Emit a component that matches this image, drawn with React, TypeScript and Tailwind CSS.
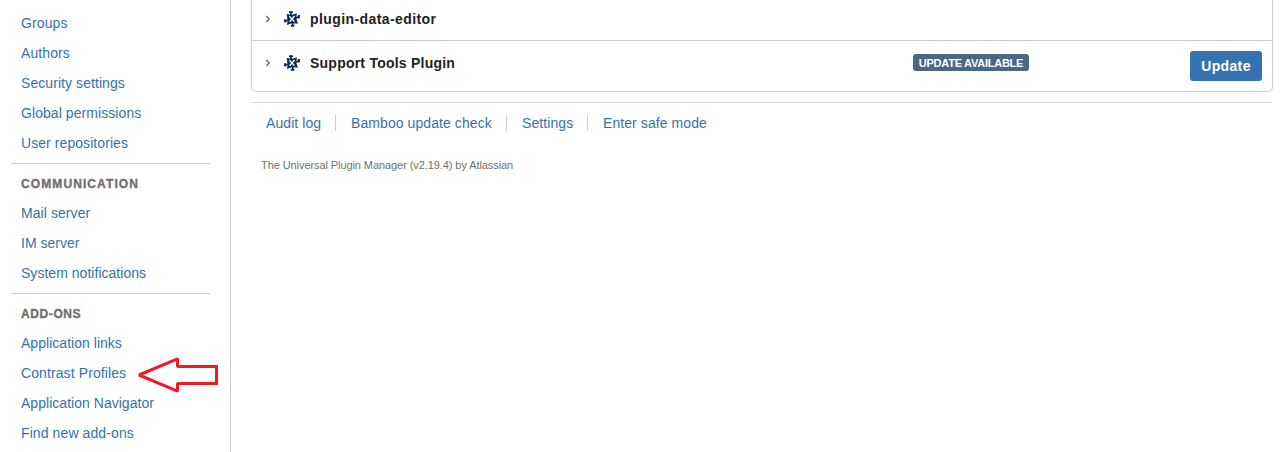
import React from "react";

type NavLink = { label: string; spacing?: string };

const general: NavLink[] = [
  { label: "Groups", spacing: "tracking-[0.12px]" },
  { label: "Authors", spacing: "tracking-[0.1px]" },
  { label: "Security settings" },
  { label: "Global permissions" },
  { label: "User repositories" },
];
const communication: NavLink[] = [
  { label: "Mail server" },
  { label: "IM server", spacing: "tracking-normal" },
  { label: "System notifications", spacing: "tracking-[0.03px]" },
];
const addons: NavLink[] = [
  { label: "Application links", spacing: "tracking-[0.03px]" },
  { label: "Contrast Profiles", spacing: "tracking-[0.1px]" },
  { label: "Application Navigator", spacing: "tracking-[0.03px]" },
  { label: "Find new add-ons", spacing: "tracking-[0.1px]" },
];

function NavSection({ title, titleSpacing, links }: { title?: string; titleSpacing?: string; links: NavLink[] }) {
  return (
    <section>
      {title && (
        <h2 className="mt-[5px] h-[29px] pl-2.5 text-[12px] leading-[30px] font-bold text-[#707070] [-webkit-text-stroke:0.35px_#707070]">
          <span className={titleSpacing}>{title}</span>
        </h2>
      )}
      <ul>
        {links.map((link) => (
          <li key={link.label} className="h-[30px] pl-2.5 leading-[30px]">
            <a href="#" className={link.spacing ?? "tracking-[0.07px]"}>{link.label}</a>
          </li>
        ))}
      </ul>
    </section>
  );
}

function Chevron() {
  return (
    <svg width="6" height="8" viewBox="0 0 6 8" fill="none" stroke="#707070" strokeWidth="1.5" className="shrink-0">
      <path d="M1.2 1 L4.2 4 L1.2 7" />
    </svg>
  );
}

function PluginIcon() {
  return (
    <svg width="16" height="16" viewBox="0 0 16 16" fill="none" className="shrink-0">
      <path d="M2.8 2.8 L6.3 3.8 L9 3.4 L12.9 2.2 L12.4 6 L12.6 8.6 L13.9 12.8 L9.8 12.3 L7.4 12.6 L2.9 13.9 L3.6 9.8 L3.2 7.2 Z" fill="#0b2b5c" />
      <path d="M5.4 5.2 L10.4 10.6 M10.6 5 L5.6 10.8" stroke="#fff" strokeWidth="1.35" />
      <path d="M7 4.4 L6.8 1.5 M11.8 6.8 L14.6 6 M8.8 11.7 L8.7 14.5 M4.2 9.2 L1.5 10" stroke="#0b2b5c" strokeWidth="1.8" />
      <path
        d="M5 0.2 H9 V2 H5 Z M13.8 4 H15.9 V7.4 H13.8 Z M6.8 14 H10.4 V15.8 H6.8 Z M0.1 8.3 H2 V11.6 H0.1 Z"
        fill="#0b2b5c"
      />
    </svg>
  );
}

function ToolbarLink({ label, className }: { label: string; className: string }) {
  return (
    <li className={`h-4 shrink-0 leading-4 ${className}`}>
      <a href="#">{label}</a>
    </li>
  );
}

export default function App() {
  return (
    <div className="flex h-[452px] w-[1288px] overflow-hidden bg-white font-['Liberation_Sans',Arial,sans-serif] text-sm whitespace-nowrap text-[#3572b0]">
      <aside className="relative w-[231px] shrink-0 border-r border-[#cccccc] pt-2 pr-5 pl-[11px]">
        <NavSection links={general} />
        <div className="mt-[5px] border-t border-[#cccccc]" />
        <NavSection title="COMMUNICATION" titleSpacing="tracking-[1.1px]" links={communication} />
        <div className="mt-[5px] border-t border-[#cccccc]" />
        <NavSection title="ADD-ONS" titleSpacing="tracking-[0.6px]" links={addons} />
        <svg width="84" height="40" viewBox="0 0 84 40" fill="none" className="absolute top-[355px] left-[136px]">
          <path d="M3 20 L41.5 3.8 V11.5 H80.5 V28.5 H41.5 V36.2 Z" stroke="#ed1c24" strokeWidth="3" strokeLinejoin="bevel" />
          <path d="M79 10 h3 v3 h-3 z M79 27 h3 v3 h-3 z" fill="#ed1c24" />
        </svg>
      </aside>

      <main className="ml-5 w-[1022px] shrink-0">
        <div className="h-[92px] rounded-b-[5px] border-x border-b border-[#cccccc] text-[#222222]">
          <div className="flex h-[41px] items-start border-b border-[#cccccc] pl-[13px]">
            <div className="flex h-[38px] items-center">
              <Chevron />
              <span className="w-[13px]" />
              <PluginIcon />
              <strong className="ml-2.5 tracking-[0.41px]">plugin-data-editor</strong>
            </div>
          </div>
          <div className="flex h-[50px] items-start pl-[13px] pr-2.5">
            <div className="flex h-[44px] w-[648px] items-center">
              <Chevron />
              <span className="w-[13px]" />
              <PluginIcon />
              <strong className="ml-2.5 tracking-[0.23px]">Support Tools Plugin</strong>
            </div>
            <span className="mt-[13px] flex h-[17px] w-[116px] items-center justify-center rounded-[3px] bg-[#4a6785] pt-[2px] text-[11px] leading-[15px] font-bold tracking-[-0.25px] text-white">
              UPDATE AVAILABLE
            </span>
            <button className="mt-2.5 ml-auto h-[30px] w-[72px] rounded-[3px] bg-[#3572b0] font-bold tracking-[0.35px] text-white">
              Update
            </button>
          </div>
        </div>

        <footer className="mt-2.5 w-[1020px] border-t border-[#dddddd]">
          <ul className="flex pt-3 pl-[15px] tracking-[0.08px]">
            <ToolbarLink label="Audit log" className="w-[70px] border-r border-[#cccccc]" />
            <ToolbarLink label="Bamboo update check" className="w-[171px] border-r border-[#cccccc] pl-[15px]" />
            <ToolbarLink label="Settings" className="w-[81px] border-r border-[#cccccc] pl-[15px]" />
            <ToolbarLink label="Enter safe mode" className="pl-[15px]" />
          </ul>
          <p className="mt-[26px] pl-2.5 text-[11px] leading-4 tracking-[-0.08px] text-[#707070]">
            The Universal Plugin Manager (v2.19.4) by Atlassian
          </p>
        </footer>
      </main>
    </div>
  );
}
